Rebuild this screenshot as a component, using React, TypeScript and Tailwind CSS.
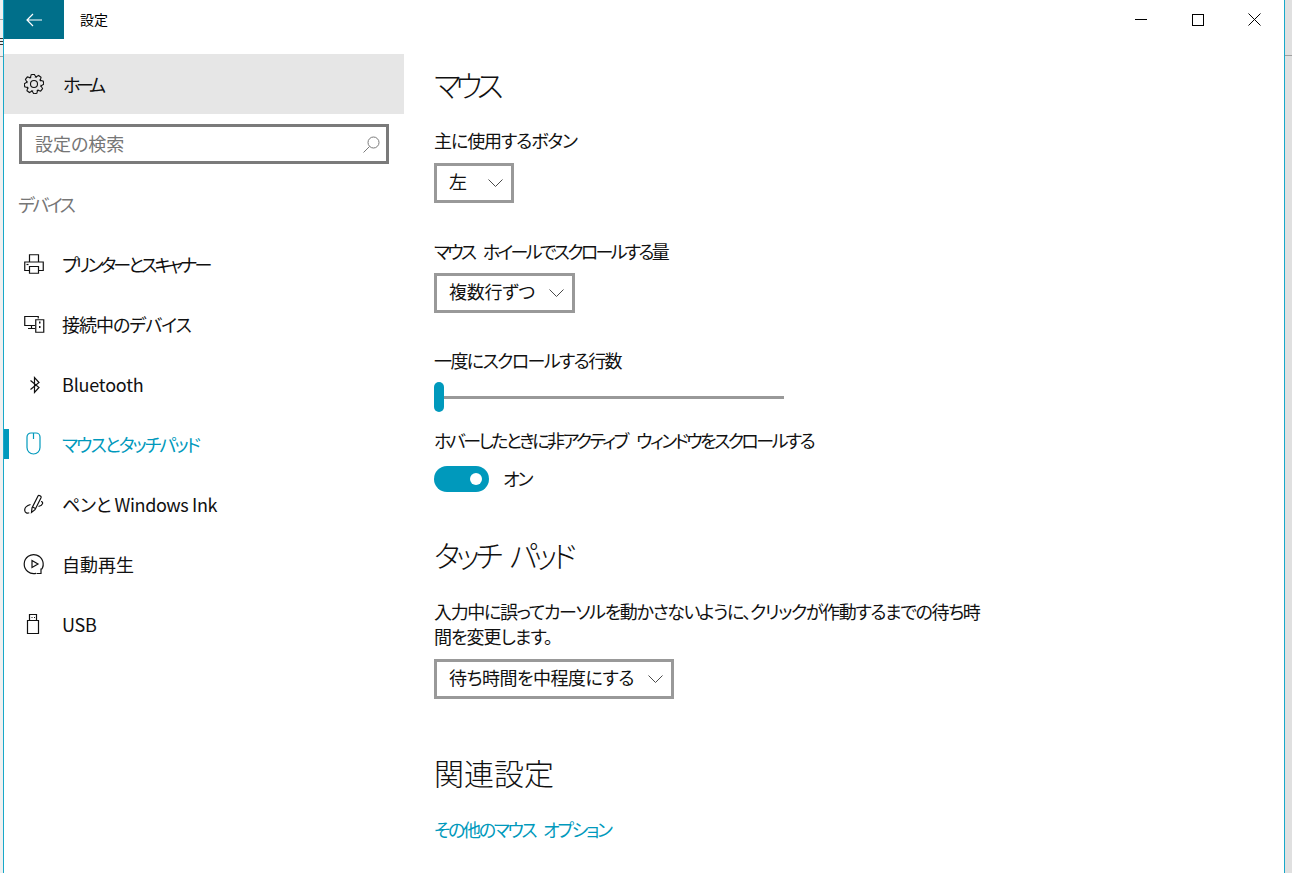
const jp = "font-['Noto_Sans_CJK_JP','Noto_Sans',sans-serif] [font-feature-settings:'palt']"

function Chevron() {
  return (
    <svg width="15" height="8" viewBox="0 0 15 8" fill="none" stroke="#4a4a4a" strokeWidth="1">
      <path d="M.5.500l7 7 7-7" />
    </svg>
  )
}

function Dropdown({ label, width, tracking }: { label: string; width: string; tracking?: string }) {
  return (
    <div className={`flex h-10 items-center justify-between border-[3px] border-[#999999] pl-3 pr-[8px] text-[18px] leading-none text-[#111111] ${width}`}>
      <span className={`pb-[4px] ${tracking ?? ""}`}>{label}</span>
      <Chevron />
    </div>
  )
}

// 8 toothed gear, same outline as the shell's settings glyph
function gearPath() {
  const pts: string[] = []
  for (let i = 0; i < 8; i++) {
    const a = (i * Math.PI) / 4 - Math.PI / 8
    const steps: [number, number][] = [
      [7.2, a - 0.14],
      [9.7, a + 0.1],
      [9.7, a + 0.42],
      [7.2, a + 0.66],
    ]
    for (const [r, t] of steps) {
      pts.push(`${(10 + r * Math.cos(t)).toFixed(2)} ${(10 + r * Math.sin(t)).toFixed(2)}`)
    }
  }
  return `M${pts.join("L")}Z`
}

const icons: Record<string, React.ReactNode> = {
  printer: (
    <>
      <path d="M5.500 8V.75h9V8" />
      <path d="M5 16.500H.75V8h18.500v8.500H15" />
      <path d="M5.500 12.500h9v6.750h-9z" />
      <path d="M2.500 10.500h2" />
    </>
  ),
  devices: (
    <>
      <path d="M11 11.500H.75v-9h13.500v2" />
      <path d="M4 14.500h7M7.500 11.500v3" />
      <path d="M11.750 5.750h8v12.500h-8z" />
      <path d="M15 8.500h1.500M15 13h1.500" strokeWidth="2" />
    </>
  ),
  bluetooth: <path d="M6.500 6.500L15 13.500l-4.500 5v-15l4.500 5-8.500 7" />,
  mouse: <path d="M7 -1h5a4 4 0 0 1 4 4v10.500a6.500 6.500 0 0 1-13 0V3a4 4 0 0 1 4-4zM9.500 -1v6" />,
  pen: (
    <>
      <path d="M7.500 18.500l.5-4.500 6-12c.7-1.300 3.700.2 3 1.700l-6 12z" />
      <path d="M8.500 13l3 1.500" />
      <path d="M6.500 10.500C3 11.500.5 14 .75 16.500c.2 2.500 2.700 3 4.500 2.300" />
      <path d="M17 7.500c2.500.3 2.500 3.500-2.500 5" />
    </>
  ),
  play: (
    <>
      <path d="M12 19.300A9.500 9.500 0 1 1 17.500 15.500" />
      <path d="M8 6.500l6 3.500-6 3.500z" />
      <path d="M17 14.500v5h-4.500" />
    </>
  ),
  usb: (
    <>
      <path d="M3.500 6.500h11v13h-11zM5.500 6.500v-6h7v6" />
      <path d="M7.500 3.500h1M10 3.500h1" />
    </>
  ),
}

function NavItem({ icon, label, active, tracking }: { icon: string; label: string; active?: boolean; tracking?: string }) {
  return (
    <div className={`relative flex h-[60px] items-center pl-[20px] text-[18px] ${active ? "text-[#0099bc]" : "text-[#111111]"}`}>
      {active && <span className="absolute left-0 top-[15px] h-[30px] w-[5px] bg-[#0099bc]" />}
      <svg className="mr-[18px] h-5 w-5 shrink-0 overflow-visible" viewBox="0 0 20 20" fill="none" stroke={active ? "#0099bc" : "#111111"} strokeWidth="1.200">
        {icons[icon]}
      </svg>
      <span className={tracking}>{label}</span>
    </div>
  )
}

export default function App() {
  return (
    <div className={`flex h-[873px] w-[1292px] overflow-hidden bg-white ${jp}`}>
      {/* desktop peeking out at both sides */}
      <div className="w-[3px] shrink-0 bg-[#f0f0f0]">
        <div className="mt-[19px] h-px bg-[#a0a0a0]" />
        <div className="mt-[18px] h-px bg-[#333333]" />
        <div className="mt-[2px] h-px bg-[#333333]" />
        <div className="mt-[2px] h-px bg-[#333333]" />
        <div className="mt-[11px] h-px bg-[#a0a0a0]" />
      </div>
      <div className="flex w-[1282px] shrink-0 flex-col border-x border-[#18a8c9]">
        <header className="flex h-[39px] shrink-0 items-stretch">
          <div className="flex w-[60px] items-center justify-center bg-[#006f8a]">
            <svg width="16" height="14" viewBox="0 0 16 14" fill="none" stroke="#ffffff" strokeWidth="1.200">
              <path d="M7 1L1 7l6 6M1 7h15" />
            </svg>
          </div>
          <div className="ml-4 flex items-center text-[14px] text-black">設定</div>
          <div className="ml-auto flex items-center pr-px">
            <div className="flex w-[57px] justify-center">
              <span className="block h-px w-3 bg-black" />
            </div>
            <div className="flex w-[57px] justify-center">
              <span className="block h-[12px] w-[12px] border border-black" />
            </div>
            <div className="flex w-[57px] justify-center">
              <svg width="13" height="13" viewBox="0 0 13 13" fill="none" stroke="#000000" strokeWidth="1">
                <path d="M.5.500l12 12M12.500.500l-12 12" />
              </svg>
            </div>
          </div>
        </header>

        <div className="flex min-h-0 flex-1 pt-[15px]">
          <aside className="w-[400px] shrink-0">
            <div className="flex h-[60px] items-center bg-[#e6e6e6] pl-[20px] text-[18px] text-[#111111]">
              <svg className="mr-[19px] h-5 w-5" viewBox="0 0 20 20" fill="none" stroke="#111111" strokeWidth="1.100">
                <path d={gearPath()} />
                <circle cx="10" cy="10" r="3.500" />
              </svg>
              <span className="tracking-[-4.300px]">ホーム</span>
            </div>
            <div className="ml-[15px] mt-[10px] flex h-10 w-[370px] items-center justify-between border-[3px] border-[#7a7a7a] pl-[13px] pr-[6px] text-[18px] text-[#767676]">
              <span className="pb-[2px]">設定の検索</span>
              <svg width="17" height="17" viewBox="0 0 17 17" fill="none" stroke="#7a7a7a" strokeWidth="1">
                <circle cx="10.500" cy="6.500" r="5.500" />
                <path d="M6.500 10.500L.5 16.500" />
              </svg>
            </div>
            <div className="mb-[16px] ml-[14px] mt-[26px] text-[18px] leading-[28px] tracking-[-2.500px] text-[#767676]">デバイス</div>
            <NavItem icon="printer" label="プリンターとスキャナー" tracking="tracking-[-2.900px]" />
            <NavItem icon="devices" label="接続中のデバイス" tracking="tracking-[-1px]" />
            <NavItem icon="bluetooth" label="Bluetooth" tracking="tracking-[-0.200px]" />
            <NavItem icon="mouse" label="マウスとタッチパッド" tracking="tracking-[-1.900px]" active />
            <NavItem icon="pen" label="ペンと Windows Ink" tracking="tracking-[-0.400px]" />
            <NavItem icon="play" label="自動再生" />
            <NavItem icon="usb" label="USB" tracking="tracking-[-0.200px]" />
          </aside>

          <main className="pl-[30px] pt-[13px] text-[18px] text-[#111111]">
            <h2 className="text-[30px] font-light leading-[34px] tracking-[-5.600px]">マウス</h2>
            <p className="mt-[26px] leading-[26px] tracking-[-1.100px]">主に使用するボタン</p>
            <div className="mt-[10px]"><Dropdown label="左" width="w-[80px]" /></div>
            <p className="mt-[35px] leading-[26px] tracking-[-2.700px] [word-spacing:7px]">マウス ホイールでスクロールする量</p>
            <div className="mt-[9px]"><Dropdown label="複数行ずつ" width="w-[141px]" tracking="tracking-[-0.300px]" /></div>
            <p className="mt-[34px] leading-[26px] tracking-[-1.600px]">一度にスクロールする行数</p>
            <div className="mt-[9px] flex h-[30px] items-center">
              <span className="h-[30px] w-[10px] rounded-[5px] bg-[#0099bc]" />
              <span className="h-[3px] w-[340px] bg-[#999999]" />
            </div>
            <p className="mt-[15px] leading-[26px] tracking-[-2.550px] [word-spacing:8px]">ホバーしたときに非アクティブ ウィンドウをスクロールする</p>
            <div className="mt-[12px] flex items-center">
              <span className="flex h-[26px] w-[55px] items-center justify-end rounded-full bg-[#0099bc] pr-[7px]">
                <span className="h-[12px] w-[12px] rounded-full bg-white" />
              </span>
              <span className="ml-[14px] tracking-[-2px]">オン</span>
            </div>
            <h2 className="mt-[45px] text-[30px] font-light leading-[34px] tracking-[-4.100px] [word-spacing:8px]">タッチ パッド</h2>
            <p className="mt-[28px] leading-[25px]">
              <span className="tracking-[-1.350px]">入力中に誤ってカーソルを動かさないように、クリックが作動するまでの待ち時</span>
              <br />
              <span className="tracking-[-1px]">間を変更します。</span>
            </p>
            <div className="mt-[10px]"><Dropdown label="待ち時間を中程度にする" width="w-[240px]" tracking="tracking-[-0.500px]" /></div>
            <h2 className="mt-[56px] text-[30px] font-light leading-[34px]">関連設定</h2>
            <p className="mt-[27px] leading-[26px] tracking-[-2.300px] text-[#0099bc] [word-spacing:6px]">その他のマウス オプション</p>
          </main>
        </div>
      </div>
      <div className="flex-1 bg-[#e0e0e0]">
        <div className="mt-[55px] h-px bg-[#a0a0a0]" />
      </div>
    </div>
  )
}
